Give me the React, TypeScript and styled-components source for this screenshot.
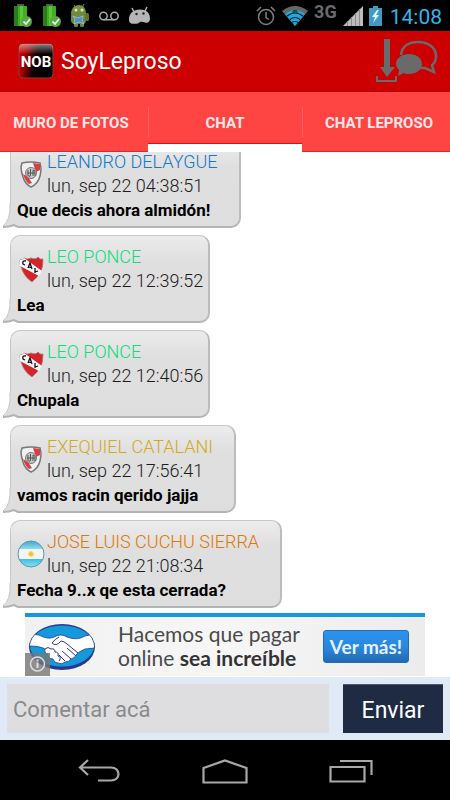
import React from "react";
import styled, { createGlobalStyle } from "styled-components";

const Global = createGlobalStyle`
  * { box-sizing: border-box; }
  body { margin: 0; font-family: Roboto, "Noto Sans", sans-serif; background: #fff; }
  button, input { font-family: inherit; border: 0; margin: 0; padding: 0; border-radius: 0; }
  svg { display: block; flex: none; }
`;

const Screen = styled.div`
  height: 100vh;
  display: flex;
  flex-direction: column;
  overflow: hidden;
`;

const StatusBar = styled.div`
  flex: none;
  height: 31px;
  background: #000;
  display: flex;
  align-items: center;
  justify-content: space-between;
  padding: 0 8px 0 12px;
`;

const StatusGroup = styled.div<{ $gap: number }>`
  display: flex;
  align-items: center;
  gap: ${(p) => p.$gap}px;
`;

const Network = styled.span`
  color: #6a6a6a;
  font-size: 18px;
  font-weight: 700;
  line-height: 16px;
  padding-bottom: 8px;
`;

const Clock = styled.time`
  color: #33b5e5;
  font-size: 21px;
  line-height: 24px;
  padding: 2px 0 0 2px;
`;

const ActionBar = styled.header`
  flex: none;
  height: 61px;
  background: #cc0000;
  border-bottom: 1px solid #a80000;
  display: flex;
  align-items: center;
  padding: 0 12px 0 18px;
`;

const Title = styled.h1`
  margin: 2px auto 0 7px;
  color: #fff;
  font-size: 23px;
  line-height: 28px;
  font-weight: 400;
`;

const BarButton = styled.button`
  background: none;
  cursor: pointer;
`;

const Tabs = styled.nav`
  flex: none;
  height: 60px;
  display: flex;
  margin: 0 -6px;
  background: #ff4444;
`;

const Tab = styled.button<{ $active?: boolean }>`
  flex: 1;
  display: flex;
  align-items: center;
  justify-content: center;
  padding-top: ${(p) => (p.$active ? 9 : 2)}px;
  background: transparent;
  color: #fbe9e9;
  font-size: 15px;
  font-weight: 700;
  line-height: 20px;
  border-bottom: ${(p) => (p.$active ? "8px solid #fff" : "1px solid #f02020")};
  box-shadow: ${(p) => (p.$active ? "inset 0 -1px #f00" : "none")};
`;

const TabDivider = styled.span`
  width: 1px;
  height: 30px;
  margin: 15px -1px 0 0;
  background: #ff6060;
`;

const MessageList = styled.ul`
  flex: 1;
  min-height: 0;
  margin: 0;
  padding: 0 10px 5px;
  list-style: none;
  overflow: hidden;
  display: flex;
  flex-direction: column;
  justify-content: flex-end;
  align-items: flex-start;
  gap: 7px;
`;

const Bubble = styled.li`
  position: relative;
  isolation: isolate;
  flex: none;
  padding: 9px 5px 4px 6px;
  border: 1px solid #c8c8c8;
  border-bottom: 2px solid #b4b4b4;
  border-right: 2px solid #bcbcbc;
  border-radius: 10px;
  background: linear-gradient(#ececec, #dfdfdf 30%, #dedede);
  height: 88px;
`;

const Tail = styled.svg`
  position: absolute;
  z-index: -1;
  left: -9px;
  bottom: -3px;
`;

const Head = styled.div`
  display: flex;
  align-items: center;
  gap: 2px;
`;

const Sender = styled.div<{ $color: string }>`
  color: ${(p) => p.$color};
  font-size: 18px;
  line-height: 24px;
  font-weight: 300;
  padding-right: 16px;
  white-space: nowrap;
`;

const Stamp = styled.time`
  display: block;
  color: #1c1c1c;
  font-size: 18px;
  line-height: 24px;
  font-weight: 300;
  white-space: nowrap;
`;

const Message = styled.p`
  margin: 0;
  color: #000;
  font-size: 17px;
  line-height: 24px;
  font-weight: 700;
  white-space: nowrap;
`;

const Ad = styled.a`
  flex: none;
  position: relative;
  align-self: center;
  width: calc(100% - 50px);
  max-width: 400px;
  height: 63px;
  margin-bottom: 1px;
  display: flex;
  align-items: center;
  padding: 0 16px 0 4px;
  border-top: 4px solid #0f9ae0;
  background: linear-gradient(90deg, #f1f1f1, #f6f6f6 50%, #ececec);
  text-decoration: none;
`;

const AdText = styled.span`
  margin: 0 auto 0 23px;
  color: #4a4a4a;
  font-family: Lato, sans-serif;
  font-size: 21px;
  line-height: 24px;
  padding-bottom: 2px;
  white-space: nowrap;
`;

const AdStrong = styled.strong`
  color: #333;
  font-weight: 700;
`;

const AdAction = styled.span`
  width: 86px;
  height: 33px;
  border: 1px solid #1d6fbe;
  border-radius: 3px;
  background: linear-gradient(#2b93ee, #2a86dc 55%, #2369b2);
  color: #e4f1fd;
  font-family: Lato, sans-serif;
  font-size: 19px;
  font-weight: 700;
  line-height: 32px;
  text-align: center;
`;

const AdInfo = styled.svg`
  position: absolute;
  left: 0;
  bottom: 0;
`;

const Composer = styled.form`
  flex: none;
  height: 63px;
  display: flex;
  gap: 14px;
  padding: 7px;
  background: #dfeaf6;
`;

const CommentBox = styled.input`
  flex: 1;
  min-width: 0;
  padding: 2px 6px 0;
  background: #dedee0;
  color: #333;
  font-size: 22px;
  outline: none;
  &::placeholder { color: #8a8a8a; opacity: 1; }
`;

const Send = styled.button`
  width: 100px;
  background: #1f2b43;
  border-top: 1px solid #4d5a6c;
  color: #fff;
  font-size: 23px;
  padding-top: 2px;
`;

const NavBar = styled.nav`
  flex: none;
  height: 60px;
  background: #000;
  display: flex;
  align-items: center;
  justify-content: center;
  gap: 81px;
  padding-top: 2px;
`;

const Battery = () => (
  <svg width="20" height="24" viewBox="0 0 20 24">
    <rect x="5" y="0" width="7" height="3" fill="#555" />
    <rect x="2" y="2" width="13" height="20" rx="1" fill="#3fae22" />
    <rect x="2" y="2" width="4" height="20" fill="#2a7d18" />
    <rect x="8" y="2" width="3" height="20" fill="#5ac837" />
    <circle cx="14.500" cy="17.500" r="5.500" fill="#56a845" />
    <path d="M11.500 17.500l2.500 2.500 4-5" fill="none" stroke="#e8f0e4" strokeWidth="1.800" />
  </svg>
);

const Droid = () => (
  <svg width="20" height="24" viewBox="0 0 20 24">
    <path d="M1 10C1 4 5 1 9 1s7 3 7 9z" fill="#76913a" />
    <path d="M4 1l2 3M14 0l-2 4" stroke="#76913a" />
    <rect x="1" y="8" width="15" height="12" rx="4" fill="#708b36" />
    <rect x="15" y="9" width="4" height="8" rx="1.500" fill="#5e752c" />
    <rect x="4" y="17" width="4" height="6" rx="1.500" fill="#708b36" />
    <rect x="10" y="17" width="4" height="6" rx="1.500" fill="#708b36" />
    <circle cx="6" cy="6" r="1.500" fill="#ddd" /><circle cx="12" cy="6" r="1.500" fill="#ddd" />
    <path d="M3 12l5 2 5-2-1 4 2 4-5-2-5 2 1-5z" fill="#4e8fd0" stroke="#b8d4ee" strokeWidth=".6" />
  </svg>
);

const Voicemail = () => (
  <svg width="20" height="12" viewBox="0 0 20 12" fill="none" stroke="#aaa" strokeWidth="1.500">
    <circle cx="4.500" cy="6" r="3.700" /><circle cx="15.500" cy="6" r="3.700" /><path d="M4.500 9.700h11" />
  </svg>
);

const DroidHead = () => (
  <svg width="24" height="20" viewBox="0 0 24 20">
    <path d="M6 6L4 2M17 5l2-4" fill="none" stroke="#b5b5b5" strokeWidth="1.500" />
    <path d="M1 14C1 7 5 4 12 3.500c7 0 10 4 10 9 0 3-2 5-5 4-3-1-5-1-7 1-6 1-9 0-9-3.500z" fill="#b5b5b5" />
    <circle cx="8.500" cy="8" r="1.200" fill="#222" /><circle cx="15.500" cy="7.500" r="1.200" fill="#222" />
  </svg>
);

const Alarm = () => (
  <svg width="20" height="22" viewBox="0 0 20 22" fill="none" stroke="#808080" strokeWidth="1.500">
    <circle cx="10" cy="12" r="7.500" /><path d="M10 7v5.500l3 2M1 6l4-4M19 6l-4-4" />
  </svg>
);

const Wifi = () => (
  <svg width="26" height="20" viewBox="0 0 26 20">
    <path d="M0 5Q13-5 26 5L13 20z" fill="#666" />
    <path d="M3 8Q13 0 23 8L13 20z" fill="#24a5d8" />
    <path d="M5 10Q13 4 21 10M8 13.500Q13 9.500 18 13.500M10 16.500Q13 14.500 16 16.500" fill="none" stroke="#06222e" strokeWidth="1.200" />
    <path d="M11 4h4l1 3h-6z" fill="#155" />
  </svg>
);

const Signal = () => (
  <svg width="20" height="20" viewBox="0 0 20 20">
    <path d="M0 20L20 0v20z" fill="#bdbdbd" />
    <path d="M4.500 15v5M8.500 11v9M12.500 7v13M16.500 3v17" stroke="#8a8a8a" />
  </svg>
);

const Charge = () => (
  <svg width="13" height="20" viewBox="0 0 13 20">
    <path d="M4 0h5v2h4v18H0V2h4z" fill="#3d9cc0" />
    <path d="M8 4L3 11h3l-2 6 6-8H7l3-5z" fill="#e6f6fc" />
  </svg>
);

const AppIcon = () => (
  <svg width="36" height="36" viewBox="0 0 36 36" role="img" aria-label="NOB">
    <defs>
      <linearGradient id="nob" x1="0" y1="0" x2="1" y2="0.200">
        <stop offset="0" stopColor="#e00000" /><stop offset=".25" stopColor="#a00000" />
        <stop offset=".55" stopColor="#100000" /><stop offset="1" stopColor="#000" />
      </linearGradient>
      <linearGradient id="shine" x1="0" y1="0" x2="0" y2="1">
        <stop offset="0" stopColor="#fff" stopOpacity=".5" /><stop offset=".3" stopColor="#fff" stopOpacity="0" />
      </linearGradient>
    </defs>
    <rect x="1" y="1" width="34" height="34" rx="4" fill="url(#nob)" stroke="#8c3a3a" />
    <rect x="1" y="1" width="34" height="34" rx="4" fill="url(#shine)" />
    <text x="18" y="24" textAnchor="middle" fill="#fff" fontFamily="Roboto, sans-serif" fontWeight="700" fontSize="15">NOB</text>
  </svg>
);

const DownloadChat = () => (
  <svg width="62" height="44" viewBox="0 0 62 44">
    <path d="M8 0h6v28h5l-8 10-7-10h4zM0 37h2v4h17v-4h2v6H0z" fill="#6a6a6a" />
    <path d="M25 16C26 7 33 3 42 3c11 0 18 6 18 14 0 4-1 7-4 9l2 7-9-4h-5" fill="none" stroke="#6a6a6a" strokeWidth="2.500" />
    <path d="M33 15c7 0 13 4 13 10s-6 10-13 10c-2 0-4 0-5-1l-6 3 1-6c-2-2-3-4-3-6 0-6 6-10 13-10z" fill="#6a6a6a" />
  </svg>
);

const River = () => (
  <svg width="28" height="28" viewBox="0 0 28 28">
    <path d="M5 3q9-2 18 0l1 5q0 4-1 8-2 8-9 11-6-3-8-10-2-6-2-10z" fill="#f0f0f0" stroke="#777" strokeWidth="1.500" />
    <path d="M16 3l7 1v6l-4 2zM6 14l5 3 4 6-3 1q-4-3-6-10z" fill="#dc3b43" />
    <circle cx="14" cy="13" r="5.500" fill="#c8c8c8" stroke="#777" />
    <path d="M11 10v6M13.500 9v6q0 2-2 1M16 10v6M16 10l2 1v5M10 13h8" fill="none" stroke="#555" />
  </svg>
);

const Independiente = () => (
  <svg width="28" height="28" viewBox="0 0 28 28">
    <path d="M3 5q3 0 4-2 3 2 7 0 5 2 7-1 2 3 5 2 0 8-2 12-3 6-9 11-6-4-9-10-3-6-3-12z" fill="#d5232a" stroke="#a77" strokeWidth=".8" />
    <path d="M3 5q3 0 4-2l18 13-3 5L3 11z" fill="#f5f5f5" />
    <path d="M9 6q-4-1-3 3l2 1M11 13l2-5 2 6m-3-2l3 1M18 18v-5M21 16l-3 1" fill="none" stroke="#111" strokeWidth="1.300" />
  </svg>
);

const Argentina = () => (
  <svg width="28" height="28" viewBox="0 0 28 28">
    <defs>
      <clipPath id="disc"><circle cx="14" cy="14" r="13" /></clipPath>
      <linearGradient id="sky" x1="0" y1="0" x2="0" y2="1"><stop offset="0" stopColor="#3a9fc4" /><stop offset=".3" stopColor="#8bd8ef" /><stop offset=".7" stopColor="#45bfe2" /><stop offset="1" stopColor="#8de7f6" /></linearGradient>
    </defs>
    <g clipPath="url(#disc)"><path fill="url(#sky)" d="M0 0h28v28H0z" /><path fill="#f4f4f4" d="M0 9h28v10H0z" /></g>
    <circle cx="14" cy="14" r="13" fill="none" stroke="#5a98aa" />
    <circle cx="14" cy="14" r="2.500" fill="#f2c230" stroke="#f7dd80" />
  </svg>
);

const Handshake = () => (
  <svg width="66" height="46" viewBox="0 0 66 46">
    <defs><clipPath id="oval"><ellipse cx="33" cy="22" rx="32" ry="20.500" /></clipPath></defs>
    <ellipse cx="33" cy="23" rx="33" ry="23" fill="#273a8d" />
    <g clipPath="url(#oval)">
      <path fill="#1699dc" d="M0 0h66v46H0z" />
      <path d="M0 10l10 1q9 5 15 2 7-4 13 0 10 4 18-1l10-2v14l-10 1q-7 3-9 6-1 3-5 4-2 3-6 3-3 3-7 1-4 0-5-4-5 0-5-5-4-1-3-5-5-3-16-3z" fill="#fff" stroke="#273a8d" strokeWidth=".8" />
      <path d="M30 13q-4 2-7 6 4 4 9-2 3 0 6 3l11 9M33 27l9 8M30 31l6 6M38 24l9 8M16 25q3-3 6 0 4-1 4 3 4 0 3 4 4 1 1 5" fill="none" stroke="#273a8d" strokeWidth="1" />
    </g>
  </svg>
);

const crests = { river: River, independiente: Independiente, argentina: Argentina };

type Entry = { crest: keyof typeof crests; name: string; color: string; date: string; text: string };

const messages: Entry[] = [
  { crest: "river", name: "LEANDRO DELAYGUE", color: "#1478c8", date: "lun, sep 22 04:38:51", text: "Que decis ahora almidón!" },
  { crest: "independiente", name: "LEO PONCE", color: "#10dc82", date: "lun, sep 22 12:39:52", text: "Lea" },
  { crest: "independiente", name: "LEO PONCE", color: "#10dc82", date: "lun, sep 22 12:40:56", text: "Chupala" },
  { crest: "river", name: "EXEQUIEL CATALANI", color: "#d2aa1e", date: "lun, sep 22 17:56:41", text: "vamos racin qerido jajja" },
  { crest: "argentina", name: "JOSE LUIS CUCHU SIERRA", color: "#dc780a", date: "lun, sep 22 21:08:34", text: "Fecha 9..x qe esta cerrada?" },
];

const ChatBubble = ({ entry }: { entry: Entry }) => {
  const Crest = crests[entry.crest];
  return (
    <Bubble>
      <Tail width="22" height="26" viewBox="0 0 22 26">
        <path d="M8 0Q9 17 1 24q6 0 11-2l4 2h6V0z" fill="#dedede" />
        <path d="M8 0Q9 17 1 23" fill="none" stroke="#c4c4c4" />
        <path d="M12 22l4 3h6v1H0v-2z" fill="#fff" />
        <path d="M1 24q6 0 11-2l4 2h6" fill="none" stroke="#b4b4b4" strokeWidth="2" />
      </Tail>
      <Head>
        <Crest />
        <div>
          <Sender $color={entry.color}>{entry.name}</Sender>
          <Stamp>{entry.date}</Stamp>
        </div>
      </Head>
      <Message>{entry.text}</Message>
    </Bubble>
  );
};

export default function App() {
  return (
    <>
      <Global />
      <Screen>
        <StatusBar>
          <StatusGroup $gap={9}>
            <Battery />
            <Battery />
            <Droid />
            <Voicemail />
            <DroidHead />
          </StatusGroup>
          <StatusGroup $gap={6}>
            <Alarm />
            <Wifi />
            <Network>3G</Network>
            <Signal />
            <Charge />
            <Clock>14:08</Clock>
          </StatusGroup>
        </StatusBar>
        <ActionBar>
          <AppIcon />
          <Title>SoyLeproso</Title>
          <BarButton type="button" aria-label="Chats"><DownloadChat /></BarButton>
        </ActionBar>
        <Tabs>
          <Tab type="button">MURO DE FOTOS</Tab>
          <TabDivider />
          <Tab type="button" $active>CHAT</Tab>
          <TabDivider />
          <Tab type="button">CHAT LEPROSO</Tab>
        </Tabs>
        <MessageList>
          {messages.map((m) => <ChatBubble key={m.date} entry={m} />)}
        </MessageList>
        <Ad href="#">
          <Handshake />
          <AdText>Hacemos que pagar<br />online <AdStrong>sea increíble</AdStrong></AdText>
          <AdAction>Ver más!</AdAction>
          <AdInfo width="25" height="23" viewBox="0 0 25 23">
            <path d="M0 0h25v23H0z" fill="#777" fillOpacity=".8" />
            <circle cx="12.500" cy="11" r="7" fill="none" stroke="#ddd" strokeWidth="1.500" />
            <path d="M12.500 9.500v5.500M12.500 6.500v2" stroke="#ddd" strokeWidth="2" />
          </AdInfo>
        </Ad>
        <Composer onSubmit={(e) => e.preventDefault()}>
          <CommentBox type="text" placeholder="Comentar acá" aria-label="Comentar acá" />
          <Send type="submit">Enviar</Send>
        </Composer>
        <NavBar>
          <BarButton type="button" aria-label="Back">
            <svg width="44" height="24" viewBox="0 0 44 24" fill="none" stroke="#a8a8a8" strokeWidth="2.200">
              <path d="M11 1L3 8.500l8 7.500M3 8.500h31c10 0 10 13 0 13H21" />
            </svg>
          </BarButton>
          <BarButton type="button" aria-label="Home">
            <svg width="46" height="25" viewBox="0 0 46 25" fill="none" stroke="#a8a8a8" strokeWidth="2.200">
              <path d="M1.500 9L23 1.500 44.500 9v14.500h-43z" />
            </svg>
          </BarButton>
          <BarButton type="button" aria-label="Recent apps">
            <svg width="44" height="24" viewBox="0 0 44 24" fill="none" stroke="#a8a8a8" strokeWidth="2.200">
              <path d="M1.500 8h34v14.500h-34zM11 2h31.500v14" />
            </svg>
          </BarButton>
        </NavBar>
      </Screen>
    </>
  );
}
